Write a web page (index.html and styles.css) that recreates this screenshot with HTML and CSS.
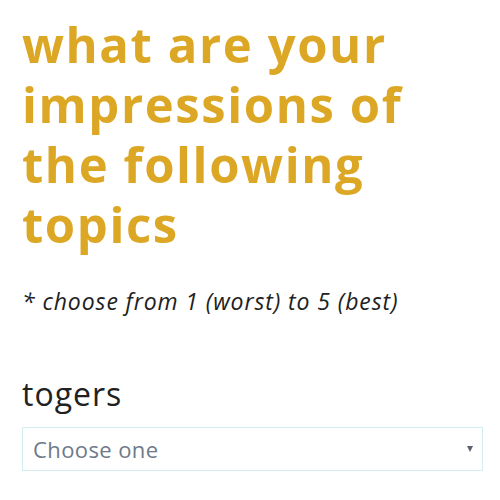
FILE: index.html
```html
<!DOCTYPE html>
<html>
<head>
<meta charset="utf-8">
<link rel="stylesheet" href="styles.css">
</head>
<body>
<main class="page">
  <h1 class="title">what are your impressions of the following topics</h1>
  <p class="hint">* choose from 1 (worst) to 5 (best)</p>
  <section class="topic">
    <label class="topic-label" for="togers">togers</label>
    <div class="select-wrap">
      <select id="togers" class="select">
        <option>Choose one</option>
      </select>
      <span class="caret"></span>
    </div>
  </section>
</main>
</body>
</html>
```

FILE: styles.css
```css
html, body {
  margin: 0;
  padding: 0;
  background: #ffffff;
}
body {
  font-family: "Open Sans", "Noto Sans", sans-serif;
  color: #212121;
}
.page {
  padding: 14px 17px 0 22px;
}
.title {
  margin: 0;
  width: 440px;
  font-size: 49px;
  line-height: 60px;
  letter-spacing: 1.6px;
  font-weight: 700;
  color: #dca724;
}
.hint {
  margin: 32px 0 0 0;
  font-size: 23px;
  line-height: 30px;
  letter-spacing: 0.9px;
  font-style: italic;
  color: #212121;
}
.topic {
  margin-top: 58px;
}
.topic-label {
  display: block;
  font-size: 32px;
  line-height: 40px;
  letter-spacing: 1px;
  color: #212121;
}
.select-wrap {
  position: relative;
  margin-top: 13px;
}
.select {
  display: block;
  width: 100%;
  height: 44px;
  box-sizing: border-box;
  border: 1px solid #d3eeee;
  border-radius: 0;
  background: #ffffff;
  padding: 0 10px;
  font-family: "Open Sans", "Noto Sans", sans-serif;
  font-size: 22px;
  letter-spacing: 0.4px;
  color: #6d7a8a;
  -webkit-appearance: none;
  appearance: none;
  outline: none;
}
.caret {
  position: absolute;
  right: 10px;
  top: 19px;
  width: 0;
  height: 0;
  border-left: 3px solid transparent;
  border-right: 3px solid transparent;
  border-top: 6px solid #5a6270;
}
```
